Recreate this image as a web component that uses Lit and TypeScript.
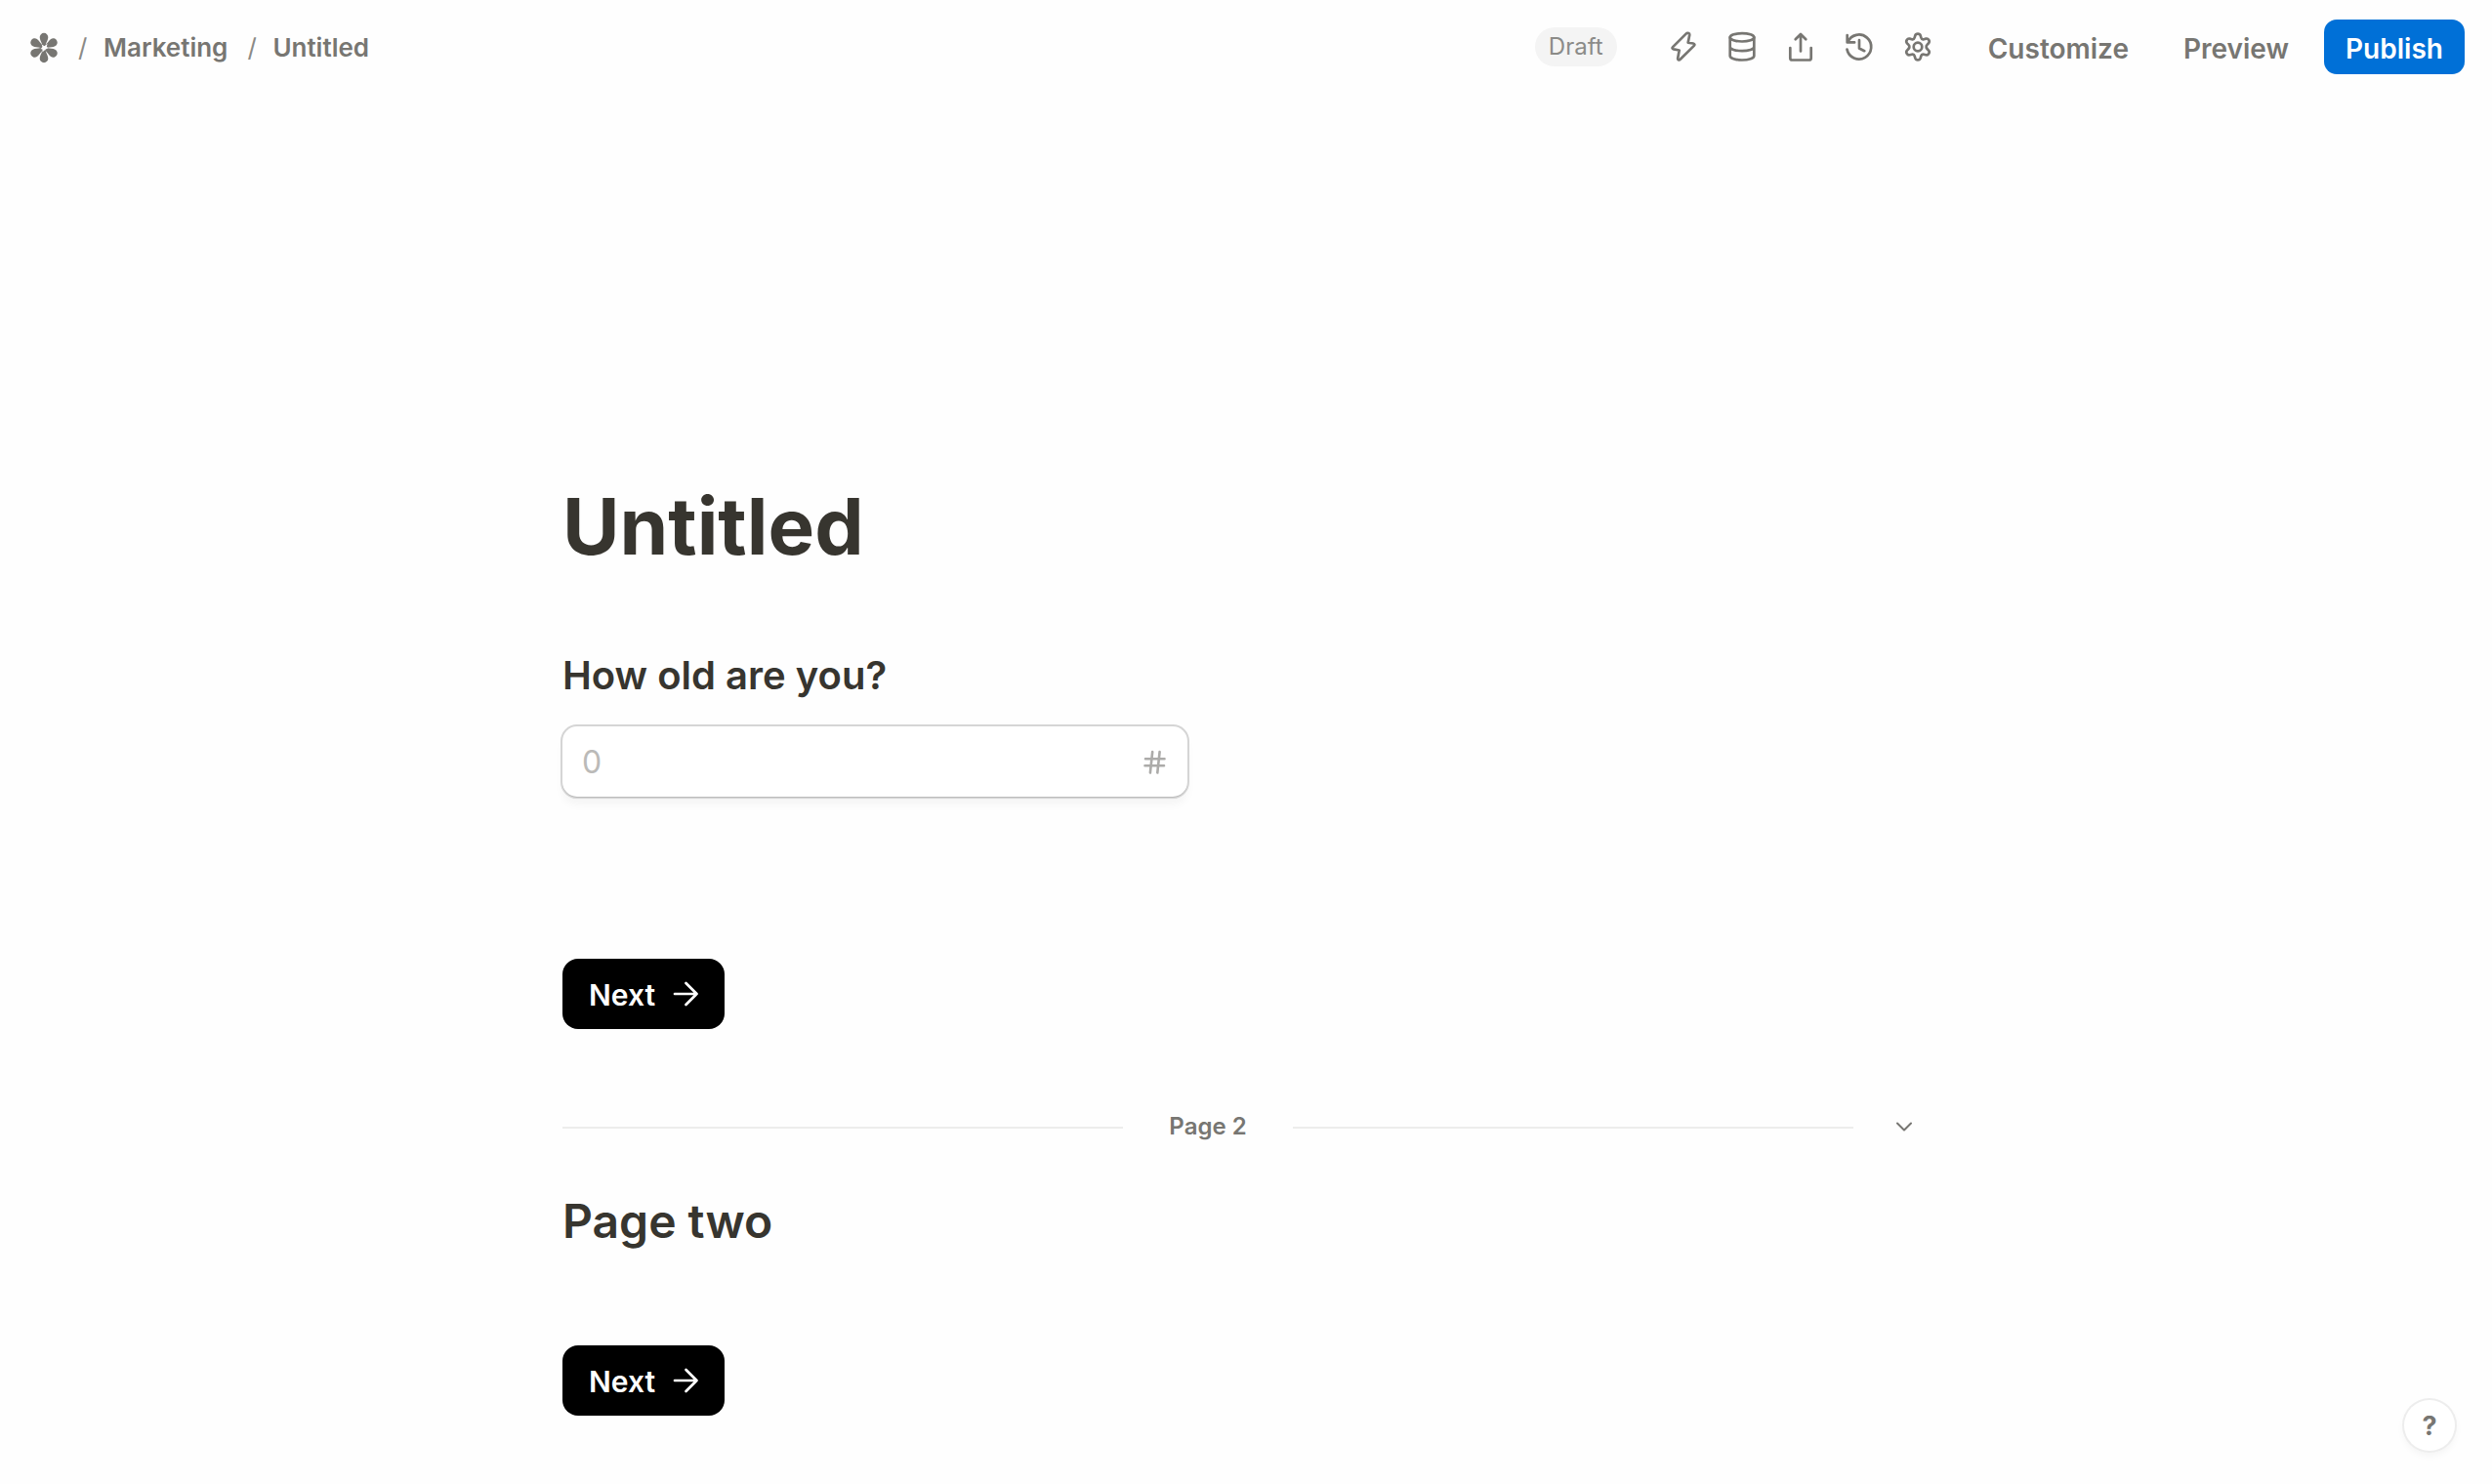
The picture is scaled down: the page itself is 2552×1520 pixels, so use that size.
import { LitElement, html, css, svg } from "lit";
import { customElement, property } from "lit/decorators.js";

const icons: Record<string, unknown> = {
  logo: svg`<g fill="currentColor" stroke="none">${[0, 60, 120, 180, 240, 300].map(
    (a) => svg`<path transform="rotate(${a} 16 16)" d="M16 .8a4.300 4.300 0 0 1 4.300 4.500c0 2.500-1.800 4.600-2.500 7.700-.4 1.700-3.200 1.700-3.600 0-.7-3.100-2.500-5.200-2.500-7.700A4.300 4.300 0 0 1 16 .8z"/>`,
  )}</g><path fill="#fefefe" stroke="none" d="M13.600 12.600l3 1.600 2.900-2.500-.7 3.300 2.100 1-3.100 1.400-3.500 3.200.4-3.200-2.200-.4 2.200-1.800z"/>`,
  bolt: svg`<path d="M18.600 2.600 5.100 16.100c-1 1-.5 2 .8 2.300l5.800 1.100-1.500 7.900c-.3 1.800 1.300 2.600 2.500 1.400L26.800 14.900c1-1 .6-2.100-.8-2.400l-5.300-.9 1.500-7.600c.3-1.800-1.900-3.100-3.600-1.400z"/>`,
  database: svg`<ellipse cx="16" cy="6.300" rx="12.300" ry="4.200"/><path d="M3.700 6.300v18.900c0 2.400 5.500 4.300 12.300 4.300s12.300-1.900 12.300-4.300V6.300M3.700 16c0 2.400 5.500 4.200 12.300 4.200S28.300 18.400 28.300 16"/>`,
  share: svg`<path d="M5.300 17v10.500a2 2 0 0 0 2 2h17.400a2 2 0 0 0 2-2V17M16 20.500V3M10.700 8.300 16 3l5.300 5.300"/>`,
  history: svg`<path d="M3.700 4v7.400h7.400M4.200 11.200a12.500 12.500 0 1 1-.7 7.400M16 9.200v8.300l5.300 2.700"/>`,
  gear: svg`<circle cx="16" cy="16" r="4.300"/><path d="M13.300 4.400c.7-2.400 4.700-2.400 5.400 0l.6 2.100a2.400 2.400 0 0 0 2.900 1.700l2.100-.6c2.500-.6 4.500 2.800 2.700 4.700l-1.500 1.600a2.900 2.900 0 0 0 0 4.100l1.500 1.600c1.800 1.900-.2 5.300-2.700 4.700l-2.100-.6a2.400 2.400 0 0 0-2.900 1.700l-.6 2.100c-.7 2.500-4.700 2.500-5.400 0l-.6-2.100a2.400 2.400 0 0 0-2.900-1.700l-2.100.6c-2.500.6-4.500-2.800-2.700-4.700l1.500-1.600a2.900 2.900 0 0 0 0-4.100L5 12.300c-1.800-1.900.2-5.300 2.700-4.700l2.100.6a2.400 2.400 0 0 0 2.900-1.700z"/>`,
  hash: svg`<path d="M6 12.300h19.500M5.500 19.300H25M13.200 5l-2.300 21.500M20.600 5l-2.300 21.500"/>`,
  arrow: svg`<path d="M5 16h22.500M16.500 5 27.500 16l-11 11"/>`,
  chevron: svg`<path d="M9 12.500l7 7 7-7"/>`,
};

@customElement("ui-icon")
export class UiIcon extends LitElement {
  @property() name = "";
  static styles = css`
    :host { display: block; width: 32px; height: 32px; flex: none; }
    svg { display: block; width: 100%; height: 100%; fill: none; stroke: currentColor; stroke-width: var(--stroke, 2.7); stroke-linecap: round; stroke-linejoin: round; }
  `;
  render() {
    return html`<svg viewBox="0 0 32 32" aria-hidden="true">${icons[this.name]}</svg>`;
  }
}

@customElement("next-button")
export class NextButton extends LitElement {
  static styles = css`
    :host { display: block; }
    .button { display: flex; align-items: center; width: 166px; height: 72px; box-sizing: border-box; padding: 2px 0 0 27px; border: 0; border-radius: 16px; background: #000; color: #fff; font: 600 30px/40px Inter, sans-serif; }
    .arrow { --stroke: 2.7; margin: -2px 0 0 15px; }
  `;
  render() {
    return html`<button class="button">Next<ui-icon class="arrow" name="arrow"></ui-icon></button>`;
  }
}

@customElement("app-root")
export class AppRoot extends LitElement {
  static styles = css`
    :host { display: block; position: relative; height: 1520px; overflow: hidden; background: #fefefe; color: #37352f; font-family: Inter, sans-serif; }
    .header { display: flex; justify-content: space-between; align-items: center; height: 96px; padding: 0 28px 0 29px; color: #777672; }
    .crumbs { display: flex; align-items: center; font-size: 26px; font-weight: 600; line-height: 32px; }
    .logo { margin-top: 1px; }
    .crumb, .slash { padding-top: 2px; }
    .slash { width: 8px; margin: 0 18px 0 19px; font-weight: 400; color: #8b8a86; }
    .crumb + .slash { margin: 0 18px 0 20px; }
    .actions { display: flex; align-items: center; }
    .badge { box-sizing: border-box; width: 84px; height: 40px; border-radius: 20px; background: #f4f4f4; color: #8b8b88; font-size: 24px; font-weight: 400; line-height: 40px; text-align: center; margin-right: 52px; }
    .tools { display: flex; gap: 28px; margin-right: 56px; }
    .link { font-size: 28px; font-weight: 600; line-height: 36px; padding-top: 4px; }
    .customize { margin-right: 56px; }
    .preview { margin-right: 36px; }
    .publish { width: 144px; height: 56px; padding: 4px 0 0; border: 0; border-radius: 13px; background: #0070d7; color: #fff; font: 600 28px/36px Inter, sans-serif; }
    .form { width: 1400px; margin-left: 576px; padding-top: 393px; }
    .title { margin: 0; font-size: 80px; font-weight: 700; line-height: 100px; }
    .question { margin: 73px 0 0; font-size: 40px; font-weight: 600; line-height: 60px; }
    .field { display: flex; align-items: center; justify-content: space-between; box-sizing: border-box; width: 640px; height: 72px; margin: 22px 0 0; padding: 1px 17px 0 20px; border-radius: 15px; background: #fff; color: #bbbab8; font-size: 32px; line-height: 40px; box-shadow: 0 1px 0 0 #bdbdbd, 0 0 0 2px #d5d5d5, 0 1px 1px 1px rgba(0,0,0,.14), 0 8px 10px rgba(0,0,0,.04); }
    .hash { --stroke: 2.6; color: #acaba9; }
    .first-next { margin-top: 166px; }
    .divider { display: flex; align-items: center; height: 40px; margin-top: 79px; color: #777672; font-size: 24px; font-weight: 600; }
    .line { width: 574px; height: 2px; margin-top: 4px; background: #ededec; }
    .page { width: 174px; text-align: center; }
    .chevron { margin: 2px 0 0 36px; --stroke: 2; }
    .heading { margin: 48px 0 0; font-size: 48px; font-weight: 600; line-height: 60px; }
    .second-next { margin-top: 97px; }
    .help { position: absolute; right: 38px; bottom: 34px; width: 52px; height: 52px; padding: 1px 0 0; border: 0; border-radius: 50%; background: #fff; color: #777672; font: 700 27px/52px Inter, sans-serif; box-shadow: 0 0 0 2px #ededed, 0 4px 8px rgba(0,0,0,.05); }
  `;
  render() {
    return html`
      <header class="header">
        <nav class="crumbs">
          <ui-icon class="logo" name="logo"></ui-icon>
          <span class="slash">/</span><span class="crumb">Marketing</span>
          <span class="slash">/</span><span class="crumb">Untitled</span>
        </nav>
        <div class="actions">
          <span class="badge">Draft</span>
          <div class="tools">
            ${["bolt", "database", "share", "history", "gear"].map((n) => html`<ui-icon name=${n}></ui-icon>`)}
          </div>
          <span class="link customize">Customize</span>
          <span class="link preview">Preview</span>
          <button class="publish">Publish</button>
        </div>
      </header>
      <main class="form">
        <h1 class="title">Untitled</h1>
        <h3 class="question">How old are you?</h3>
        <div class="field"><span>0</span><ui-icon class="hash" name="hash"></ui-icon></div>
        <next-button class="first-next"></next-button>
        <div class="divider">
          <span class="line"></span><span class="page">Page 2</span><span class="line"></span>
          <ui-icon class="chevron" name="chevron"></ui-icon>
        </div>
        <h2 class="heading">Page two</h2>
        <next-button class="second-next"></next-button>
      </main>
      <button class="help">?</button>
    `;
  }
}
